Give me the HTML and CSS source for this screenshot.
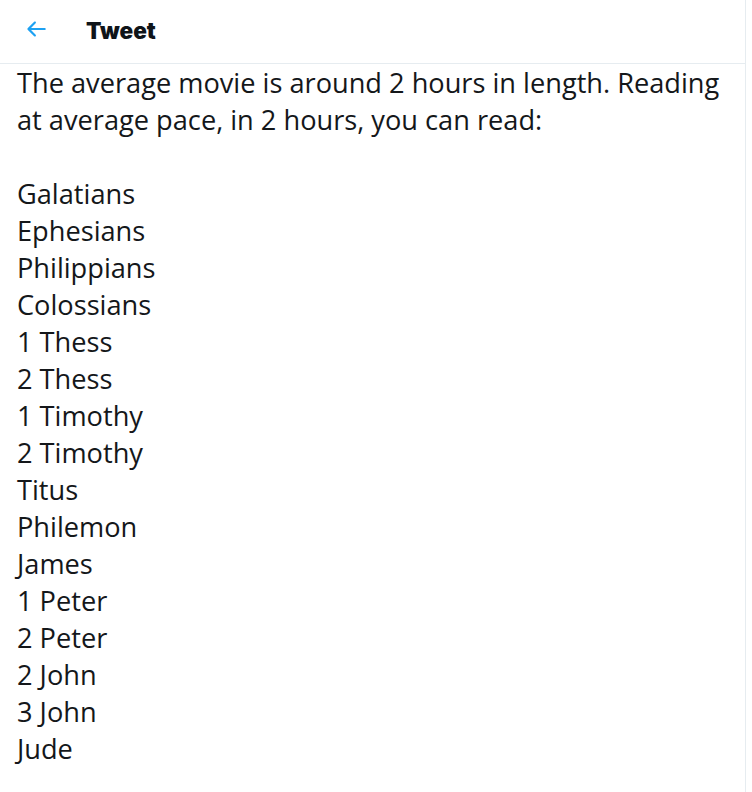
FILE: index.html
```html
<!DOCTYPE html>
<html>
<head>
<meta charset="utf-8">
<link rel="stylesheet" href="styles.css">
</head>
<body>
<div class="column">
  <header class="top">
    <svg class="back" viewBox="0 0 24 24" aria-hidden="true"><path d="M20 11H7.414l4.293-4.293c.39-.39.39-1.023 0-1.414s-1.023-.39-1.414 0l-6 6c-.39.39-.39 1.023 0 1.414l6 6c.195.195.45.293.707.293s.512-.098.707-.293c.39-.39.39-1.023 0-1.414L7.414 13H20c.553 0 1-.447 1-1s-.447-1-1-1z"/></svg>
    <h1 class="title">Tweet</h1>
  </header>
  <div class="tweet">The average movie is around 2 hours in length. Reading at average pace, in 2 hours, you can read:

Galatians
Ephesians
Philippians
Colossians
1 Thess
2 Thess
1 Timothy
2 Timothy
Titus
Philemon
James
1 Peter
2 Peter
2 John
3 John
Jude</div>
</div>
</body>
</html>
```
FILE: styles.css
```css
html, body {
  margin: 0;
  padding: 0;
  background: #ffffff;
}
body {
  font-family: "Open Sans", "Noto Sans", sans-serif;
  color: #14171a;
}
.column {
  width: 746px;
  min-height: 792px;
  border-right: 1px solid #e6ecf0;
  box-sizing: border-box;
}
.top {
  height: 63px;
  border-bottom: 1px solid #e6ecf0;
  display: flex;
  align-items: center;
  padding-left: 23px;
}
.back {
  width: 26px;
  height: 26px;
  fill: #1da1f2;
  margin-top: -5px;
}
.title {
  margin: -2px 0 0 37px;
  font-family: "Inter", "Liberation Sans", sans-serif;
  font-weight: 900;
  font-size: 22.5px;
  letter-spacing: 0;
  color: #0f1419;
}
.tweet {
  padding: 0 18px 0 17px;
  font-size: 27.2px;
  line-height: 37px;
  white-space: pre-line;
  font-weight: 400;
}
```
